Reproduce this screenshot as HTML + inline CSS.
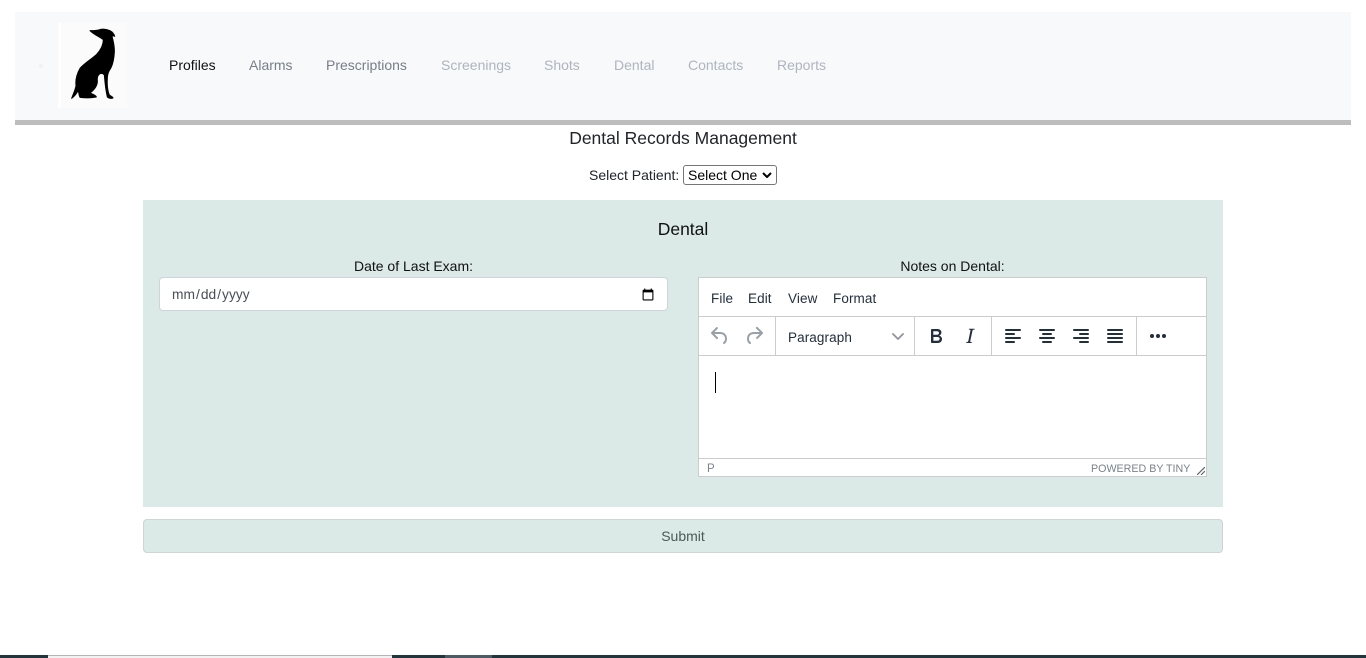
<!DOCTYPE html>
<html><head><meta charset="utf-8"><title>Dental Records Management</title>
<style>
html,body{margin:0;padding:0;width:1366px;height:658px;overflow:hidden;background:#fff;font-family:"Liberation Sans",sans-serif;font-size:14px;color:#212529}
.a{position:absolute;white-space:nowrap}
.t{position:absolute;white-space:nowrap;line-height:20px;height:20px}
.c{text-align:center}
.nav{color:#adb5bd}
.m{font-size:13.5px;color:#222f3e;letter-spacing:.1px}
svg.i{position:absolute;width:24px;height:24px;top:324px;fill:#222f3e}
.ln{position:absolute;background:#ccc}
</style></head><body>
<div class="a" style="left:15px;top:12px;width:1336px;height:108px;background:#f8f9fa"></div>
<div class="a" style="left:15px;top:120px;width:1336px;height:5px;background:#bdbdbd"></div>
<div class="a" style="left:39px;top:64px;width:4px;height:4px;border-radius:2px;background:#f0f1f2"></div>
<div class="a" style="left:58px;top:23px;width:69px;height:85px;background:#fbfbfc"></div>
<div class="a" style="left:58px;top:23px;width:3px;height:85px;background:#fff"></div>
<svg class="a" style="left:50px;top:15px;filter:blur(.3px)" width="90" height="100" viewBox="0 0 270 300"><path d="M120 47C132 47 142 47 152 43C162 41 172 44 180 47C186 50 192 56 194 64C191 62 188 62 186 64C190 78 194 95 193 112C192 130 189 146 183 158C175 170 172 178 172 192C171 210 173 228 178 240C183 244 189 245 189 249C183 251 176 250 172 246C168 230 165 205 163 180C160 176 156 174 150 176C143 180 141 186 142 196C143 208 136 222 120 234C128 238 138 240 139 246C125 249 105 249 90 247C87 241 86 233 85 226C80 235 73 244 65 250C70 236 76 224 78 212C76 196 80 178 90 160C103 145 125 132 140 118C152 105 160 88 160 74C150 66 130 58 120 47Z" fill="#000" stroke="#000" stroke-width="3" stroke-linejoin="round"/></svg>
<div class="t" style="left:169px;top:55px;color:#111">Profiles</div>
<div class="t" style="left:249px;top:55px;color:#777f87">Alarms</div>
<div class="t" style="left:326px;top:55px;color:#777f87">Prescriptions</div>
<div class="t nav" style="left:441px;top:55px">Screenings</div>
<div class="t nav" style="left:544px;top:55px">Shots</div>
<div class="t nav" style="left:614px;top:55px">Dental</div>
<div class="t nav" style="left:688px;top:55px">Contacts</div>
<div class="t nav" style="left:777px;top:55px">Reports</div>

<div class="t c" style="left:0;width:1366px;top:128px;font-size:17.5px">Dental Records Management</div>
<div class="t" style="left:589px;top:165px">Select Patient:</div>
<select class="a" style="left:683px;top:165px;width:94px;height:20px;box-sizing:border-box;font:14px 'Liberation Sans',sans-serif;padding:0 0 0 4px;background:#fff;color:#000;border:1px solid #767676;border-radius:3px;appearance:none;-webkit-appearance:none;outline:none"><option>Select One</option></select>
<svg class="a" style="left:762px;top:172px" width="10" height="6" viewBox="0 0 10 6"><path d="M1 1l4 4 4-4" fill="none" stroke="#000" stroke-width="2"/></svg>

<div class="a" style="left:143px;top:200px;width:1080px;height:307px;background:#dbeae6"></div>
<div class="t c" style="left:143px;width:1080px;top:219px;font-size:17.5px;color:#111">Dental</div>
<div class="t c" style="left:159px;width:509px;top:256px;color:#111">Date of Last Exam:</div>
<input class="a" type="date" style="left:159px;top:277px;width:509px;height:34px;box-sizing:border-box;border:1px solid #ced4da;border-radius:4px;padding:7px 10px 5px 11px;background:#fff;color:#495057;font:13.8px 'Liberation Sans',sans-serif">
<div class="t c" style="left:698px;width:509px;top:256px;color:#111">Notes on Dental:</div>

<div class="a" style="left:698px;top:277px;width:509px;height:200px;box-sizing:border-box;border:1px solid #ccc;background:#fff"></div>
<div class="ln" style="left:699px;top:316px;width:507px;height:1px"></div>
<div class="ln" style="left:699px;top:355px;width:507px;height:1px"></div>
<div class="ln" style="left:699px;top:458px;width:507px;height:1px"></div>
<div class="ln" style="left:775px;top:317px;width:1px;height:38px"></div>
<div class="ln" style="left:914px;top:317px;width:1px;height:38px"></div>
<div class="ln" style="left:991px;top:317px;width:1px;height:38px"></div>
<div class="ln" style="left:1136px;top:317px;width:1px;height:38px"></div>

<div class="t m" style="left:711px;top:289px">File</div>
<div class="t m" style="left:748px;top:289px">Edit</div>
<div class="t m" style="left:788px;top:289px">View</div>
<div class="t m" style="left:833px;top:289px">Format</div>
<div class="t m" style="left:788px;top:328px">Paragraph</div>

<svg class="i" style="left:708px;fill:#9aa0a7" viewBox="0 0 24 24"><path d="M6.4 8H12c3.7 0 6.2 2 6.8 5.1.6 2.7-.4 5.6-2.3 6.8a1 1 0 0 1-1-1.8c1.1-.6 1.8-2.7 1.4-4.6-.5-2.1-2.1-3.5-4.9-3.5H6.4l3.3 3.3a1 1 0 1 1-1.4 1.4l-5-5a1 1 0 0 1 0-1.4l5-5a1 1 0 0 1 1.4 1.4L6.4 8Z"/></svg>
<svg class="i" style="left:742px;fill:#9aa0a7" viewBox="0 0 24 24"><path d="M17.6 10H12c-2.8 0-4.4 1.4-4.9 3.5-.4 2 .3 4 1.4 4.6a1 1 0 1 1-1 1.8c-2-1.2-2.9-4.1-2.3-6.8.6-3 3-5.1 6.8-5.1h5.6l-3.3-3.3a1 1 0 1 1 1.4-1.4l5 5a1 1 0 0 1 0 1.4l-5 5a1 1 0 0 1-1.4-1.4l3.3-3.3Z"/></svg>
<svg class="a" style="left:892px;top:333px" width="12" height="7" viewBox="0 0 12 7"><path d="M1 1l5 5 5-5" fill="none" stroke="#8f959c" stroke-width="1.8" stroke-linecap="round" stroke-linejoin="round"/></svg>
<svg class="i" style="left:924px" viewBox="0 0 24 24"><path d="M7.8 19c-.3 0-.5 0-.6-.2l-.2-.5V5.7c0-.2 0-.4.2-.5l.6-.2h5c1.5 0 2.7.3 3.5 1 .7.6 1.1 1.4 1.1 2.5a3 3 0 0 1-.6 1.9c-.4.6-1 1-1.6 1.2.4.1.9.3 1.3.6s.8.7 1 1.2c.4.4.5 1 .5 1.6 0 1.3-.4 2.3-1.3 3-.8.7-2.1 1-3.8 1H7.8Zm5-8.3c.6 0 1.2-.1 1.6-.5.4-.3.6-.7.6-1.3 0-1.1-.8-1.7-2.3-1.7H9.3v3.5h3.4Zm.5 6c.7 0 1.3-.1 1.7-.4.4-.4.6-.9.6-1.5s-.2-1-.7-1.4c-.4-.3-1-.4-2-.4H9.4v3.8h4Z"/></svg>
<svg class="i" style="left:958px" viewBox="0 0 24 24"><path d="M16.7 4.7l-.1.9h-.3c-.6 0-1 0-1.4.3-.3.3-.4.6-.5 1.1l-2.1 9.8v.6c0 .5.4.8 1.4.8h.2l-.2.8H8l.2-.8h.2c1.1 0 1.8-.5 2-1.5l2-9.8.1-.5c0-.6-.4-.8-1.4-.8h-.3l.2-.9h5.8Z"/></svg>
<svg class="i" style="left:1001px" viewBox="0 0 24 24"><path d="M5 5h14c.6 0 1 .4 1 1s-.4 1-1 1H5a1 1 0 1 1 0-2Zm0 4h8c.6 0 1 .4 1 1s-.4 1-1 1H5a1 1 0 1 1 0-2Zm0 8h8c.6 0 1 .4 1 1s-.4 1-1 1H5a1 1 0 0 1 0-2Zm0-4h14c.6 0 1 .4 1 1s-.4 1-1 1H5a1 1 0 0 1 0-2Z"/></svg>
<svg class="i" style="left:1035px" viewBox="0 0 24 24"><path d="M5 5h14c.6 0 1 .4 1 1s-.4 1-1 1H5a1 1 0 1 1 0-2Zm3 4h8c.6 0 1 .4 1 1s-.4 1-1 1H8a1 1 0 1 1 0-2Zm0 8h8c.6 0 1 .4 1 1s-.4 1-1 1H8a1 1 0 0 1 0-2Zm-3-4h14c.6 0 1 .4 1 1s-.4 1-1 1H5a1 1 0 0 1 0-2Z"/></svg>
<svg class="i" style="left:1069px" viewBox="0 0 24 24"><path d="M5 5h14c.6 0 1 .4 1 1s-.4 1-1 1H5a1 1 0 1 1 0-2Zm6 4h8c.6 0 1 .4 1 1s-.4 1-1 1h-8a1 1 0 0 1 0-2Zm0 8h8c.6 0 1 .4 1 1s-.4 1-1 1h-8a1 1 0 0 1 0-2Zm-6-4h14c.6 0 1 .4 1 1s-.4 1-1 1H5a1 1 0 0 1 0-2Z"/></svg>
<svg class="i" style="left:1103px" viewBox="0 0 24 24"><path d="M5 5h14c.6 0 1 .4 1 1s-.4 1-1 1H5a1 1 0 1 1 0-2Zm0 4h14c.6 0 1 .4 1 1s-.4 1-1 1H5a1 1 0 1 1 0-2Zm0 4h14c.6 0 1 .4 1 1s-.4 1-1 1H5a1 1 0 0 1 0-2Zm0 4h14c.6 0 1 .4 1 1s-.4 1-1 1H5a1 1 0 0 1 0-2Z"/></svg>
<svg class="i" style="left:1146px" viewBox="0 0 24 24"><circle cx="6" cy="12" r="2"/><circle cx="12" cy="12" r="2"/><circle cx="18" cy="12" r="2"/></svg>

<div class="a" style="left:715px;top:372px;width:1px;height:21px;background:#000"></div>
<div class="t" style="left:707px;top:460px;height:18px;line-height:18px;font-size:11.5px;color:#7a838c">P</div>
<div class="t" style="left:1091px;top:460px;height:18px;line-height:18px;font-size:10.7px;color:#7a838c">POWERED BY TINY</div>
<svg class="a" style="left:1197px;top:467px" width="8" height="8" viewBox="0 0 8 8"><path d="M0 8L8 0M4 8L8 4" stroke="#5f6872" stroke-width="1.2" fill="none"/></svg>

<div class="a" style="left:143px;top:519px;width:1080px;height:34px;box-sizing:border-box;border:1px solid #ced4da;border-radius:4px;background:#dbeae6"></div>
<div class="t c" style="left:143px;width:1080px;top:526px;color:#4a5a5a">Submit</div>

<div class="a" style="left:0;top:655px;width:1366px;height:3px;background:#22343c"></div>
<div class="a" style="left:48px;top:655px;width:344px;height:3px;box-sizing:border-box;border-top:1px solid #b5b5b5;background:#f2f2f2"></div>
<div class="a" style="left:445px;top:655px;width:47px;height:3px;background:#4d5c64"></div>
</body></html>
